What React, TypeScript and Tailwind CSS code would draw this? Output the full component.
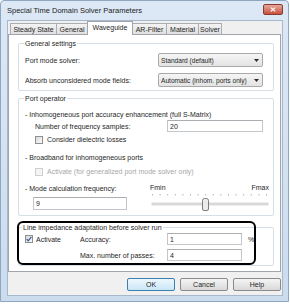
import React from "react";

function Check({ checked, disabled }: { checked?: boolean; disabled?: boolean }) {
  return (
    <span
      className={`inline-flex w-[8px] h-[8px] shrink-0 items-center justify-center border ${
        disabled
          ? "border-[#cfcfcf] bg-[#f4f4f4]"
          : "border-[#8e8f8f] bg-linear-to-br from-[#d8d8d8] to-[#fbfbfb]"
      }`}
    >
      {checked && (
        <svg width="6" height="6" viewBox="0 0 6 6">
          <path d="M0.6 3.1 L2.3 4.8 L5.4 0.9" fill="none" stroke="#3b5fa3" strokeWidth="1.3" />
        </svg>
      )}
    </span>
  );
}

function Combo({ text }: { text: string }) {
  return (
    <div className="w-[105px] h-[14px] shrink-0 border border-[#a9a9a9] rounded-[2px] bg-linear-to-b from-[#f5f5f5] to-[#e3e3e3] flex items-center pl-[2px] pr-[3px]">
      <span className="flex-1 min-w-0 text-[6.6px] leading-[9px] whitespace-nowrap overflow-hidden">{text}</span>
      <svg className="shrink-0 ml-[2px]" width="5" height="3" viewBox="0 0 5 3">
        <path d="M0 0H5L2.5 3Z" fill="#2a2a2a" />
      </svg>
    </div>
  );
}

function Field({ value, w, h }: { value: string; w: string; h: string }) {
  return (
    <div className={`${w} ${h} shrink-0 border border-[#c3c7cc] border-t-[#abadb3] bg-white flex items-center pl-[2px]`}>
      <span className="leading-[9px]">{value}</span>
    </div>
  );
}

function Slider() {
  const ticks = Array.from({ length: 16 }, (_, i) => 4 + i * 7.6);
  return (
    <svg className="block" width="125" height="19" viewBox="0 0 125 19">
      {ticks.map((x, i) => (
        <rect key={i} x={x} y={2} width="1" height="1.5" fill="#b5b5b5" />
      ))}
      <rect x="4" y="11" width="116" height="2" fill="#e3e3e3" stroke="#c4c4c4" strokeWidth="0.6" />
      <path
        d="M54.5 8.5 Q54.5 6.5 56.5 6.5 L58.5 6.5 Q60.5 6.5 60.5 8.5 L60.5 17 Q60.5 18.5 59 18.5 L56 18.5 Q54.5 18.5 54.5 17 Z"
        fill="#ececec"
        stroke="#6f6f6f"
        strokeWidth="0.9"
      />
    </svg>
  );
}

const tabs = [
  { label: "Steady State", w: "w-[47px]" },
  { label: "General", w: "w-[32px]" },
  { label: "Waveguide", w: "w-[46px]", active: true },
  { label: "AR-Filter", w: "w-[35px]" },
  { label: "Material", w: "w-[33px]" },
  { label: "Solver", w: "w-[24px]" },
];

export default function App() {
  return (
    <div className="w-[290px] h-[305px] bg-white font-['Liberation_Sans',Arial,sans-serif] text-[7px] text-[#262626]">
      <div className="w-[289px] h-[302px] border border-[#8ea6c0] rounded-t-[4px] bg-linear-to-b from-[#dce8f5] to-[#cbdcef] flex flex-col">
        {/* Title bar */}
        <div className="h-[19px] flex items-start justify-between pl-[6px] pr-[5px]">
          <span className="mt-[5px] text-[7.5px] leading-[9px] text-[#1c1c1c]">
            Special Time Domain Solver Parameters
          </span>
          <div className="mt-[3px] w-[20px] h-[11px] rounded-[2px] border border-[#8d3a2e] bg-linear-to-b from-[#e6a79c] to-[#c5503c] flex items-center justify-center">
            <svg width="6" height="5" viewBox="0 0 6 5">
              <path d="M0.8 0.6 L5.2 4.4 M5.2 0.6 L0.8 4.4" stroke="#ffffff" strokeWidth="1.2" />
            </svg>
          </div>
        </div>

        {/* Client area */}
        <div className="ml-[6px] mr-[5px] mb-[5px] flex-1 bg-[#f0f0f0] border border-[#a7b8ca] flex flex-col">
          {/* Tabs */}
          <div className="h-[13px] flex items-end pl-[2px]">
            {tabs.map((t, i) => (
              <div
                key={t.label}
                className={`${t.w} ${i > 0 ? "-ml-px" : ""} ${
                  t.active
                    ? "h-[14px] -mb-px bg-white relative z-10 border-x border-t border-[#a0a5ad] pb-[2px]"
                    : "h-[11px] bg-linear-to-b from-[#f3f3f3] to-[#e0e0e0] border-x border-t border-[#a9adb4]"
                } flex items-center justify-center leading-[9px] whitespace-nowrap`}
              >
                {t.label}
              </div>
            ))}
          </div>

          {/* Panel */}
          <div className="relative w-[273px] h-[238px] border border-[#a0a5ad] bg-white pl-[9px] pr-[6px]">
            {/* General settings */}
            <fieldset className="mt-[4px] border border-[#d5dfe5] rounded-[2px] pb-[3px]">
              <legend className="ml-[5px] px-[1px] leading-[9px]">General settings</legend>
              <div className="mt-[5px] flex items-center pl-[6px]">
                <span className="w-[133px] shrink-0 leading-[9px]">Port mode solver:</span>
                <Combo text="Standard (default)" />
              </div>
              <div className="mt-[6px] flex items-center pl-[6px]">
                <span className="w-[133px] shrink-0 leading-[9px]">Absorb unconsidered mode fields:</span>
                <Combo text="Automatic (inhom. ports only)" />
              </div>
            </fieldset>

            {/* Port operator */}
            <fieldset className="mt-[3px] border border-[#d5dfe5] rounded-[2px] pb-[4px]">
              <legend className="ml-[5px] px-[1px] leading-[9px]">Port operator</legend>
              <div className="mt-[7px] pl-[6px] leading-[9px] whitespace-nowrap">
                - Inhomogeneous port accuracy enhancement (full S-Matrix)
              </div>
              <div className="mt-[1px] flex items-center pl-[16px]">
                <span className="w-[132px] shrink-0 leading-[9px]">Number of frequency samples:</span>
                <Field value="20" w="w-[96px]" h="h-[12px]" />
              </div>
              <div className="mt-[3px] h-[9px] flex items-center gap-[4px] pl-[16px]">
                <Check />
                <span className="leading-[9px]">Consider dielectric losses</span>
              </div>
              <div className="mt-[9px] h-[9px] pl-[6px] leading-[9px]">- Broadband for inhomogeneous ports</div>
              <div className="mt-[5px] h-[9px] flex items-center gap-[4px] pl-[16px] text-[#a8a8a8]">
                <Check disabled />
                <span className="leading-[9px] whitespace-nowrap">Activate (for generalized port mode solver only)</span>
              </div>
              <div className="mt-[7px] flex">
                <div className="w-[129px] shrink-0 flex flex-col pl-[6px]">
                  <span className="mt-[1px] h-[9px] leading-[9px] whitespace-nowrap">- Mode calculation frequency:</span>
                  <div className="mt-[4px] ml-[8px]">
                    <Field value="9" w="w-[94px]" h="h-[13px]" />
                  </div>
                </div>
                <div className="w-[125px] shrink-0 flex flex-col">
                  <div className="h-[9px] flex justify-between pl-[2px] pr-[4px] leading-[9px]">
                    <span>Fmin</span>
                    <span>Fmax</span>
                  </div>
                  <Slider />
                </div>
              </div>
            </fieldset>

            {/* Line impedance */}
            <fieldset className="mt-[7px] border border-[#d5dfe5] rounded-[2px] pb-[4px]">
              <legend className="ml-[3px] px-[1px] leading-[9px]">Line impedance adaptation before solver run</legend>
              <div className="mt-[1px] h-[12px] flex items-center pl-[6px]">
                <div className="w-[55px] shrink-0 flex items-center gap-[3px]">
                  <Check checked />
                  <span className="leading-[9px]">Activate</span>
                </div>
                <span className="w-[87px] shrink-0 leading-[9px]">Accuracy:</span>
                <Field value="1" w="w-[75px]" h="h-[12px]" />
                <span className="ml-[6px] leading-[9px]">%</span>
              </div>
              <div className="mt-[4px] h-[12px] flex items-center pl-[61px]">
                <span className="w-[87px] shrink-0 leading-[9px]">Max. number of passes:</span>
                <Field value="4" w="w-[75px]" h="h-[12px]" />
              </div>
            </fieldset>

            {/* Annotation outline */}
            <div className="absolute left-[8px] top-[186px] w-[239px] h-[44px] border-2 border-black rounded-[6px] pointer-events-none" />
          </div>

          {/* Buttons */}
          <div className="mt-[6px] flex justify-end gap-[5px] pr-[1px]">
            <div className="w-[48px] h-[13px] rounded-[2px] border border-[#3c7fb1] bg-linear-to-b from-[#eef7fd] to-[#c9e6f8] flex items-center justify-center leading-[9px]">
              OK
            </div>
            <div className="w-[48px] h-[13px] rounded-[2px] border border-[#8a8a8a] bg-linear-to-b from-[#f4f4f4] to-[#d9d9d9] flex items-center justify-center leading-[9px]">
              Cancel
            </div>
            <div className="w-[48px] h-[13px] rounded-[2px] border border-[#8a8a8a] bg-linear-to-b from-[#f4f4f4] to-[#d9d9d9] flex items-center justify-center leading-[9px]">
              Help
            </div>
          </div>
        </div>
      </div>
    </div>
  );
}
